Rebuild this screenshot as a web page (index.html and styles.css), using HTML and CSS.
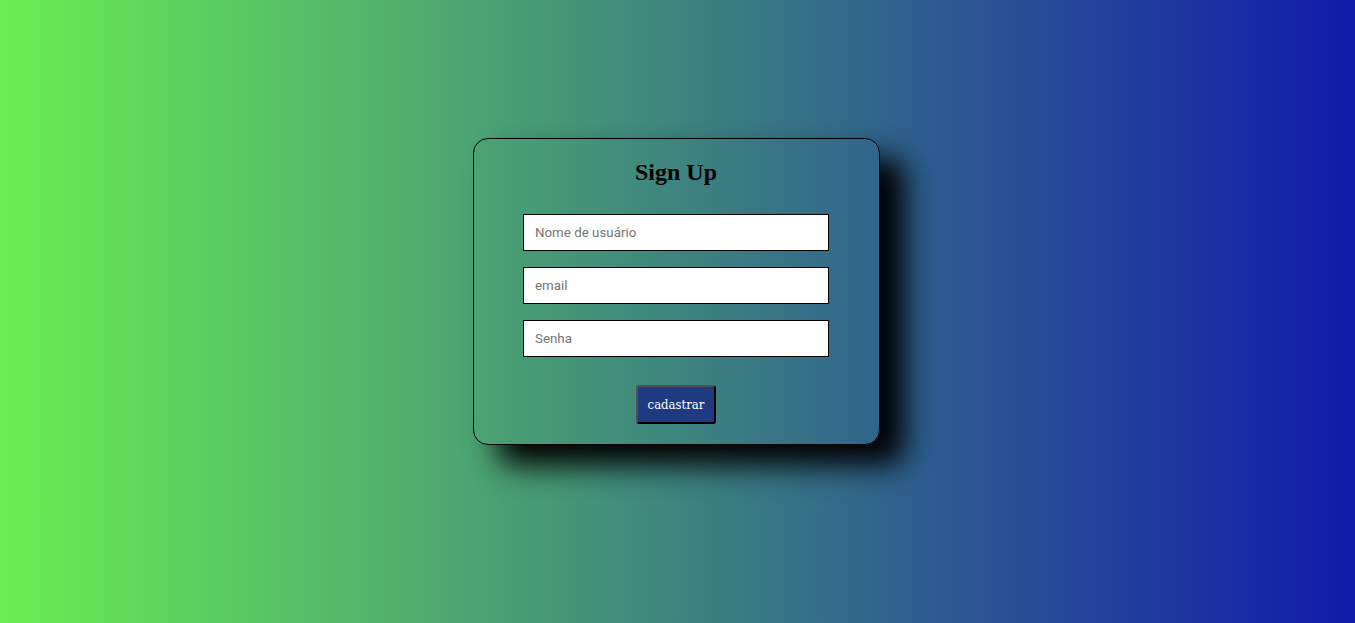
FILE: index.html
```html
<!DOCTYPE html>
<html lang="pt-BR">
<head>
<meta charset="utf-8">
<title>Sign Up</title>
<link rel="stylesheet" href="styles.css">
</head>
<body>
<main class="page">
  <form class="card">
    <h2 class="title">Sign Up</h2>
    <input class="field" type="text" placeholder="Nome de usuário">
    <input class="field" type="email" placeholder="email">
    <input class="field" type="password" placeholder="Senha">
    <button class="btn" type="button">cadastrar</button>
  </form>
</main>
</body>
</html>
```
FILE: styles.css
```css
html, body {
  margin: 0;
  padding: 0;
  height: 100%;
}
body {
  background: linear-gradient(to right, #6aee52, #121aac);
  font-family: "Liberation Serif", serif;
}
.page {
  display: flex;
  justify-content: center;
  align-items: flex-start;
  padding-top: 138px;
  padding-right: 3px;
}
.card {
  box-sizing: border-box;
  width: 407px;
  height: 307px;
  border: 1px solid #000;
  border-radius: 15px;
  box-shadow: 25px 20px 30px #000;
  display: flex;
  flex-direction: column;
  align-items: center;
}
.title {
  margin: 19px 0 0;
  font-size: 24px;
  font-weight: bold;
  line-height: 28px;
  color: #000;
}
.field {
  box-sizing: border-box;
  width: 306px;
  height: 37px;
  margin-top: 16px;
  padding: 0 10px 0 11px;
  border: 1px solid #000;
  background: #fff;
  font-family: Roboto, "Liberation Sans", sans-serif;
  font-size: 13.333px;
  color: #333;
  outline: none;
}
.field:first-of-type {
  margin-top: 28px;
}
.field::placeholder {
  color: #757575;
}
.btn {
  box-sizing: border-box;
  width: 80px;
  height: 39px;
  margin-top: 28px;
  background: #1e3a80;
  color: #fff;
  border: 2px solid;
  border-color: #505050 #000 #000 #505050;
  border-radius: 3px;
  font-family: "DejaVu Serif Condensed", "DejaVu Serif", serif;
  font-stretch: condensed;
  font-size: 13px;
  padding: 0;
  cursor: pointer;
}
```
